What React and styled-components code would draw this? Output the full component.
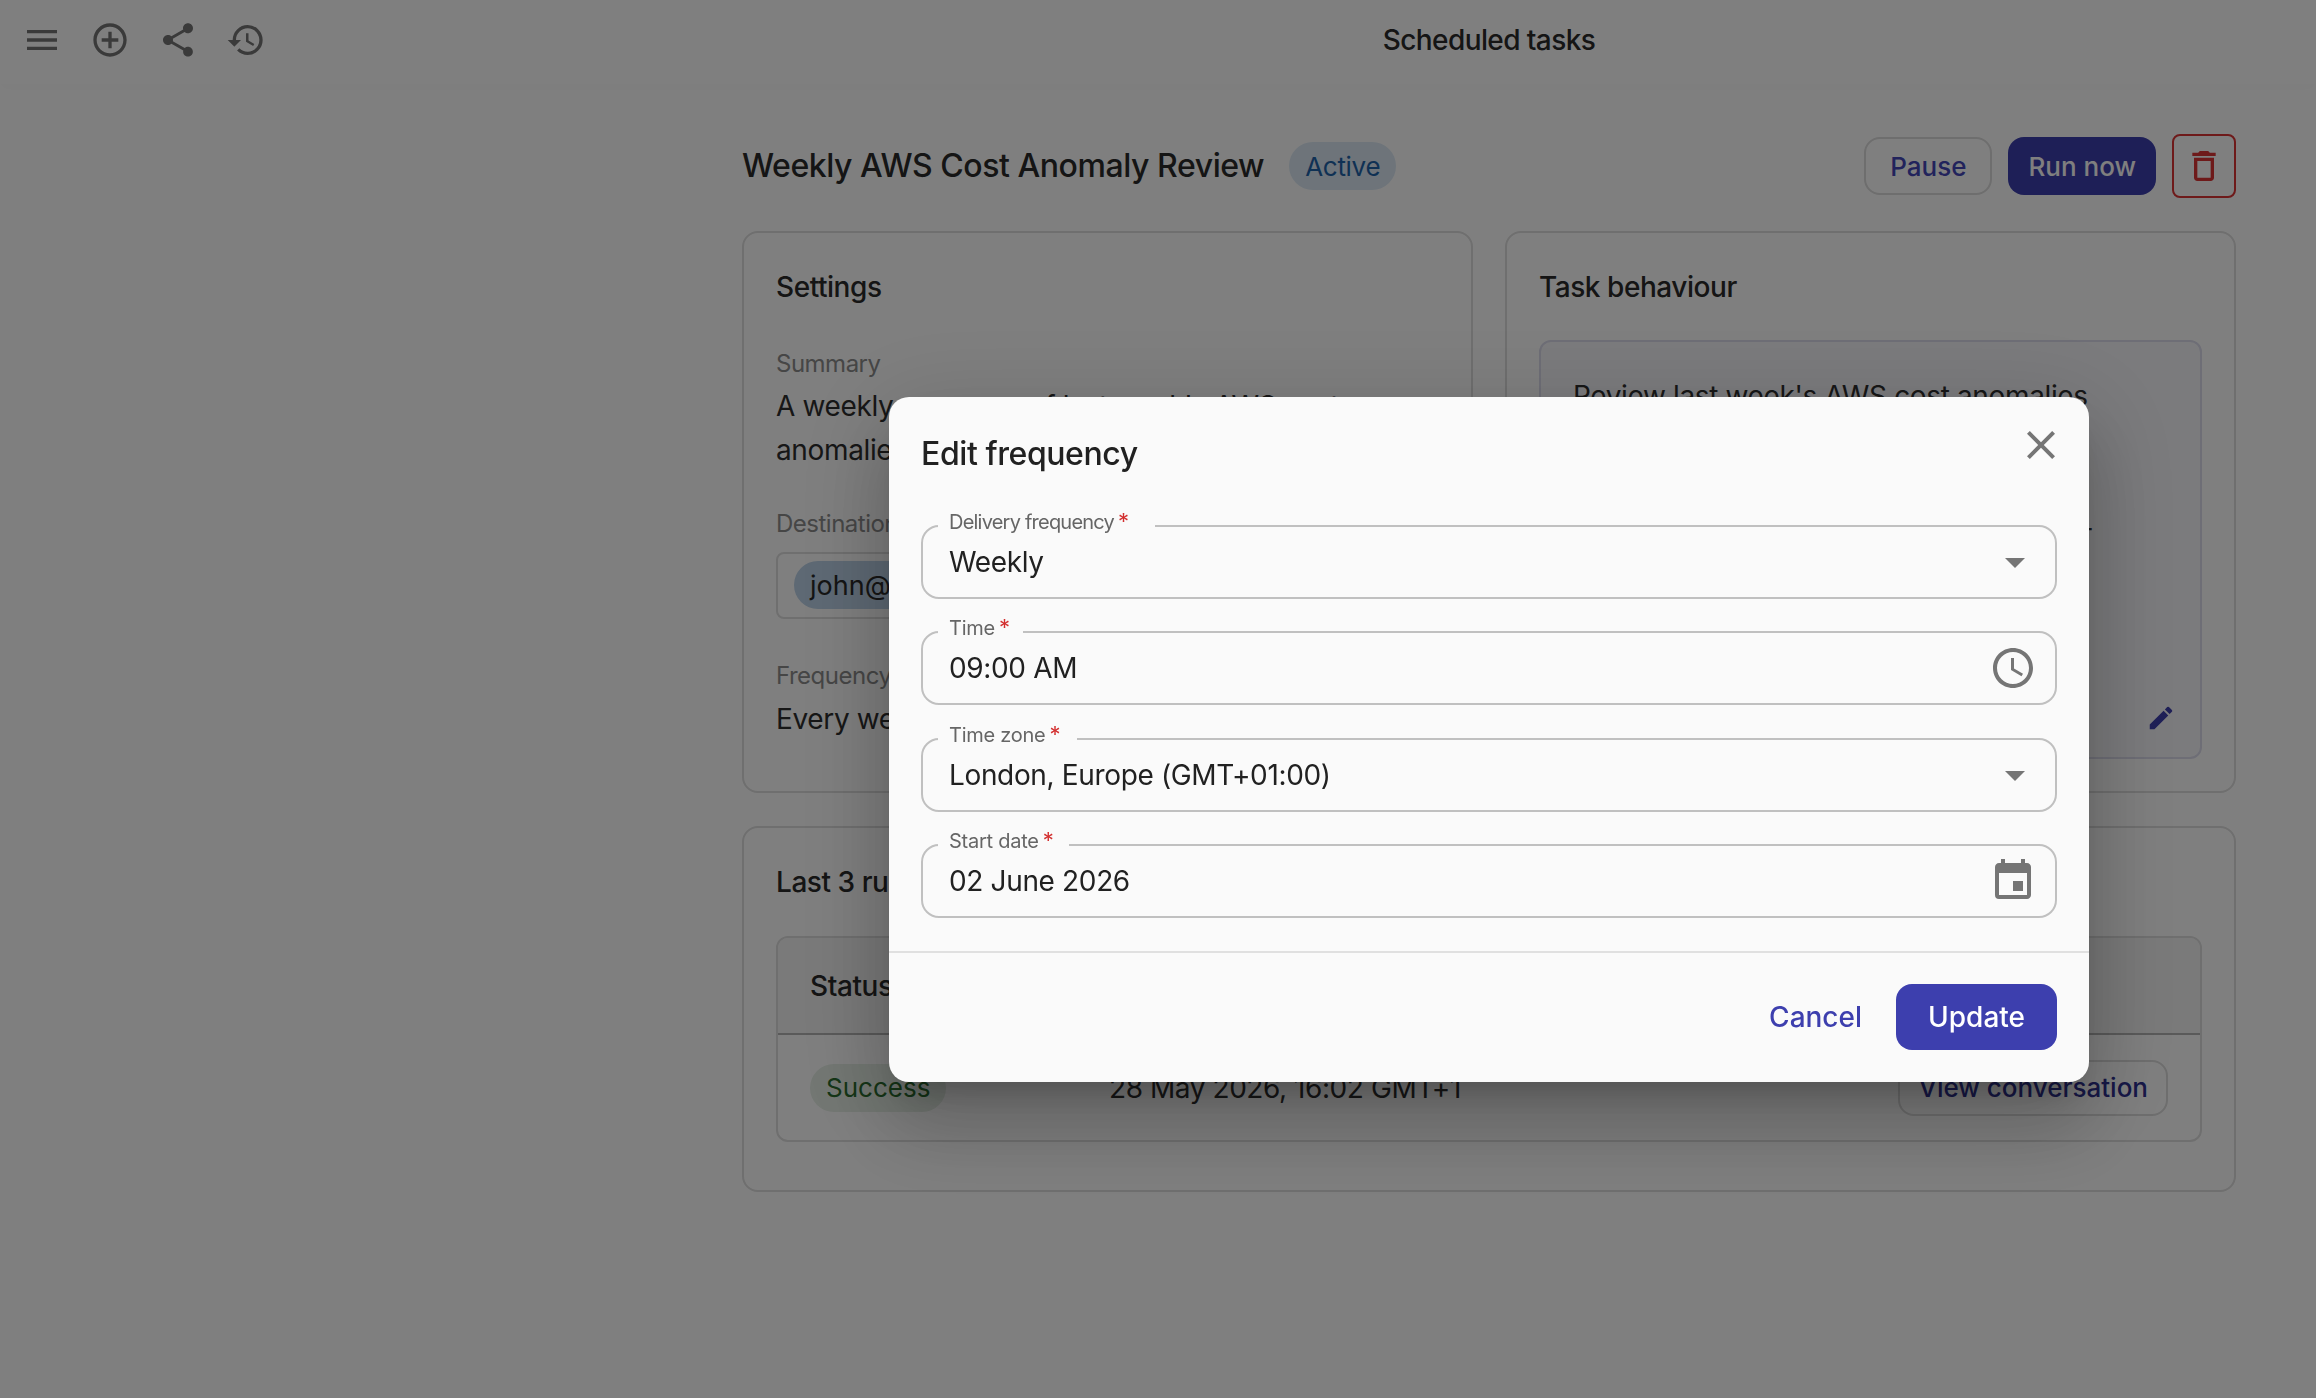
import React from "react";
import styled, { createGlobalStyle } from "styled-components";
import {
  MdMenu, MdAddCircleOutline, MdShare, MdHistory, MdDeleteOutline, MdEdit,
  MdClose, MdArrowDropDown, MdAccessTime, MdEvent,
} from "react-icons/md";

const Global = createGlobalStyle`
  html, body { margin: 0; padding: 0; height: 100%; background: #fff; }
  body { font-family: "Inter", "Liberation Sans", sans-serif; color: #2a2a2a; overflow: hidden; }
  * { box-sizing: border-box; }
  button { font-family: inherit; }
`;

const Page = styled.div`
  width: 2316px;
  height: 1398px;
  background: #fff;
`;
const TopBar = styled.header`
  display: grid;
  grid-template-columns: 662px 1fr;
  align-items: center;
  height: 84px;
  box-shadow: 0 4px 12px rgba(0, 0, 0, 0.02);
`;
const TopIcons = styled.nav`
  display: flex;
  padding: 0 0 4px 8px;
`;
const TopIconButton = styled.button`
  display: flex;
  align-items: center;
  justify-content: center;
  width: 68px;
  height: 68px;
  padding: 0;
  border: 0;
  background: none;
  color: #757575;
  font-size: 40px;
`;
const TopTitle = styled.h1`
  margin: 0 0 4px;
  text-align: center;
  font-size: 28px;
  line-height: 40px;
  font-weight: 500;
  letter-spacing: -0.6px;
  color: #2a2a2a;
`;
const Content = styled.main`
  margin-left: 662px;
  padding: 50px 80px 0;
`;
const TitleRow = styled.div`
  display: flex;
  align-items: center;
  height: 64px;
`;
const TaskTitle = styled.h2`
  margin: 0;
  font-size: 32px;
  line-height: 48px;
  font-weight: 500;
  letter-spacing: -0.44px;
  color: #2a2a2a;
`;
const StatusChip = styled.span`
  display: inline-flex;
  align-items: center;
  height: 48px;
  margin-left: 25px;
  padding: 0 16px;
  border-radius: 24px;
  font-size: 26px;
  letter-spacing: -0.3px;
  background: #dce9f5;
  color: #1f62a8;
`;
const Actions = styled.div`
  display: flex;
  align-items: center;
  margin-left: auto;
`;
const OutlineButton = styled.button`
  height: ${(p) => p.$h || 58}px;
  padding: 0 ${(p) => p.$px || 24}px;
  border: 2px solid #dcdcdc;
  border-radius: 16px;
  background: transparent;
  color: ${(p) => p.$color || "#4447b8"};
  font-size: 26px;
  font-weight: 500;
  white-space: nowrap;
`;
const PrimaryButton = styled.button`
  height: ${(p) => p.$h || 58}px;
  padding: 0 ${(p) => p.$px || 20}px;
  border: 0;
  border-radius: 16px;
  background: #3d3fae;
  color: #fff;
  font-size: ${(p) => p.$size || 28}px;
  font-weight: 500;
`;
const RunButton = styled(PrimaryButton)`
  margin-left: 16px;
`;
const DangerButton = styled.button`
  display: flex;
  align-items: center;
  justify-content: center;
  width: 64px;
  height: 64px;
  margin-left: 16px;
  padding: 0;
  border: 2px solid #dc3434;
  border-radius: 8px;
  background: transparent;
  color: #dc3434;
  font-size: 40px;
`;
const Columns = styled.div`
  display: grid;
  grid-template-columns: 1fr 1fr;
  gap: 32px;
  margin-top: 33px;
`;
const Card = styled.section`
  padding: 32px;
  border: 2px solid #dedede;
  border-radius: 16px;
  background: #fff;
`;
const RunsCard = styled(Card)`
  margin-top: 33px;
  padding-bottom: 48px;
`;
const CardTitle = styled.h3`
  margin: 0;
  font-size: 28px;
  line-height: 44px;
  font-weight: 500;
  letter-spacing: -0.45px;
  color: #2a2a2a;
`;
const MetaLabel = styled.div`
  margin-top: ${(p) => p.$mt}px;
  font-size: 24px;
  line-height: 36px;
  letter-spacing: -0.5px;
  color: #8c8c8c;
`;
const MetaText = styled.p`
  margin: ${(p) => p.$mt || 3}px 0 0;
  font-size: 28px;
  line-height: 43.5px;
  letter-spacing: -0.36px;
  color: #2e2e2e;
`;
const RecipientBox = styled.div`
  display: flex;
  align-items: center;
  height: 67px;
  margin-top: 10px;
  padding-left: 16px;
  border: 2px solid #dedede;
  border-radius: 8px;
`;
const RecipientChip = styled.span`
  display: inline-flex;
  align-items: center;
  height: 48px;
  padding: 0 16px;
  border-radius: 24px;
  font-size: 27px;
  background: #bcd2e8;
  color: #2a2a2a;
`;
const BehaviourBox = styled.div`
  position: relative;
  min-height: 419px;
  margin-top: 31px;
  padding: 32px;
  border: 2px solid #dcdcec;
  border-radius: 12px;
  background: #f7f7fb;
  font-size: 28px;
  line-height: 44px;
  letter-spacing: -0.36px;
  color: #2e2e2e;
`;
const EditButton = styled.button`
  position: absolute;
  right: 24px;
  bottom: 24px;
  display: flex;
  padding: 0;
  border: 0;
  background: none;
  color: #3d3fae;
  font-size: 30px;
`;
const RunsTable = styled.div`
  margin-top: 32px;
  border: 2px solid #dedede;
  border-radius: 12px;
  overflow: hidden;
`;
const TableRow = styled.div`
  display: grid;
  grid-template-columns: 299px 1fr auto;
  align-items: center;
  height: ${(p) => p.$h}px;
  padding: 0 32px;
  background: ${(p) => p.$bg || "transparent"};
  border-bottom: ${(p) => (p.$rule ? "2px solid #b4b4b4" : "0")};
`;
const HeadCell = styled.div`
  font-size: 28px;
  font-weight: 500;
  letter-spacing: -0.4px;
  color: #2a2a2a;
`;
const BodyCell = styled.div`
  font-size: 28px;
  letter-spacing: -0.43px;
  color: #2e2e2e;
`;
const SuccessChip = styled.span`
  display: inline-flex;
  align-items: center;
  height: 48px;
  padding: 0 16px;
  border-radius: 24px;
  font-size: 26px;
  letter-spacing: 0;
  background: #e6efe6;
  color: #2a6b2e;
`;

const Backdrop = styled.div`
  position: fixed;
  inset: 0;
  display: flex;
  align-items: center;
  justify-content: center;
  padding: 81.5px 0 0 662px;
  background: rgba(0, 0, 0, 0.5);
`;
const Dialog = styled.div`
  position: relative;
  width: 1200px;
  border-radius: 20px;
  background: #fafafa;
  box-shadow: 0 22px 30px -14px rgba(0, 0, 0, 0.2), 0 48px 76px 6px rgba(0, 0, 0, 0.14),
    0 18px 92px 16px rgba(0, 0, 0, 0.12);
`;
const DialogTitle = styled.h2`
  margin: 0;
  padding: 32.5px 32px 0;
  font-size: 32px;
  line-height: 48px;
  font-weight: 500;
  letter-spacing: -0.42px;
  color: #212121;
`;
const CloseButton = styled.button`
  position: absolute;
  top: 23.5px;
  right: 24px;
  display: flex;
  padding: 0;
  border: 0;
  background: none;
  color: #757575;
  font-size: 48px;
`;
const Form = styled.div`
  display: flex;
  flex-direction: column;
  gap: 17.5px;
  padding: 32px 32px 33px;
`;
const Field = styled.fieldset`
  margin: 0;
  padding: 0 16px 17px 26px;
  border: 2px solid #c0c0c0;
  border-radius: 18px;
`;
const Legend = styled.legend`
  margin-left: -11px;
  padding: 0 ${(p) => p.$gap}px 8px 11px;
  font-size: 20px;
  line-height: 24px;
  letter-spacing: ${(p) => p.$spacing}px;
  color: #666;
`;
const Star = styled.span`
  margin-left: 4px;
  font-size: 22px;
  line-height: 0;
  color: #d32f2f;
`;
const FieldRow = styled.div`
  display: flex;
  align-items: center;
  justify-content: space-between;
  height: 36px;
  margin-top: 2px;
`;
const FieldValue = styled.span`
  font-size: 28px;
  line-height: 36px;
  letter-spacing: -0.35px;
  color: #212121;
`;
const Adornment = styled.span`
  display: flex;
  margin: -6px ${(p) => p.$mr || 0}px -6px 0;
  color: #757575;
  font-size: 48px;
`;
const Footer = styled.div`
  display: flex;
  justify-content: flex-end;
  align-items: center;
  gap: 12px;
  padding: 31px 32px 32px;
  border-top: 2px solid #e0e0e0;
`;
const TextButton = styled.button`
  height: 66px;
  padding: 0 22px;
  border: 0;
  background: none;
  color: #3d3fae;
  font-size: 28px;
  font-weight: 500;
`;

const fields = [
  { label: "Delivery frequency", spacing: -0.78, gap: 27, value: "Weekly", icon: <MdArrowDropDown /> },
  { label: "Time", spacing: -0.25, gap: 13, value: "09:00 AM", icon: <MdAccessTime />, mr: 2 },
  { label: "Time zone", spacing: -0.25, gap: 17, value: "London, Europe (GMT+01:00)", icon: <MdArrowDropDown /> },
  { label: "Start date", spacing: -0.25, gap: 16, value: "02 June 2026", icon: <MdEvent />, mr: 2 },
];

export default function App() {
  return (
    <Page>
      <Global />
      <TopBar>
        <TopIcons>
          <TopIconButton><MdMenu /></TopIconButton>
          <TopIconButton><MdAddCircleOutline /></TopIconButton>
          <TopIconButton><MdShare /></TopIconButton>
          <TopIconButton><MdHistory /></TopIconButton>
        </TopIcons>
        <TopTitle>Scheduled tasks</TopTitle>
      </TopBar>
      <Content>
        <TitleRow>
          <TaskTitle>Weekly AWS Cost Anomaly Review</TaskTitle>
          <StatusChip>Active</StatusChip>
          <Actions>
            <OutlineButton>Pause</OutlineButton>
            <RunButton $size={26}>Run now</RunButton>
            <DangerButton><MdDeleteOutline /></DangerButton>
          </Actions>
        </TitleRow>
        <Columns>
          <Card>
            <CardTitle>Settings</CardTitle>
            <MetaLabel $mt={37}>Summary</MetaLabel>
            <MetaText>
              A weekly summary of last week's AWS cost
              <br />
              anomalies and their likely causes.
            </MetaText>
            <MetaLabel $mt={33.5}>Destination</MetaLabel>
            <RecipientBox>
              <RecipientChip>john@example.com</RecipientChip>
            </RecipientBox>
            <MetaLabel $mt={39}>Frequency</MetaLabel>
            <MetaText $mt={4.5}>Every week on Tuesday at 09:00</MetaText>
          </Card>
          <Card>
            <CardTitle>Task behaviour</CardTitle>
            <BehaviourBox>
              Review last week's AWS cost anomalies
              <br />
              and summarise the largest changes by
              <br />
              service and account, with the likely
              <br />
              and suggested follow-up actions given -
              <EditButton><MdEdit /></EditButton>
            </BehaviourBox>
          </Card>
        </Columns>
        <RunsCard>
          <CardTitle>Last 3 runs</CardTitle>
          <RunsTable>
            <TableRow $h={97} $bg="#f4f4f4" $rule>
              <HeadCell>Status</HeadCell>
              <HeadCell>Run time</HeadCell>
              <HeadCell />
            </TableRow>
            <TableRow $h={105}>
              <BodyCell><SuccessChip>Success</SuccessChip></BodyCell>
              <BodyCell>28 May 2026, 16:02 GMT+1</BodyCell>
              <OutlineButton $h={56} $px={18} $color="#2f3190">View conversation</OutlineButton>
            </TableRow>
          </RunsTable>
        </RunsCard>
      </Content>
      <Backdrop>
        <Dialog>
          <DialogTitle>Edit frequency</DialogTitle>
          <CloseButton><MdClose /></CloseButton>
          <Form>
            {fields.map((f) => (
              <Field key={f.label}>
                <Legend $gap={f.gap} $spacing={f.spacing}>{f.label}<Star>*</Star></Legend>
                <FieldRow>
                  <FieldValue>{f.value}</FieldValue>
                  <Adornment $mr={f.mr}>{f.icon}</Adornment>
                </FieldRow>
              </Field>
            ))}
          </Form>
          <Footer>
            <TextButton>Cancel</TextButton>
            <PrimaryButton $h={66} $px={32}>Update</PrimaryButton>
          </Footer>
        </Dialog>
      </Backdrop>
    </Page>
  );
}
